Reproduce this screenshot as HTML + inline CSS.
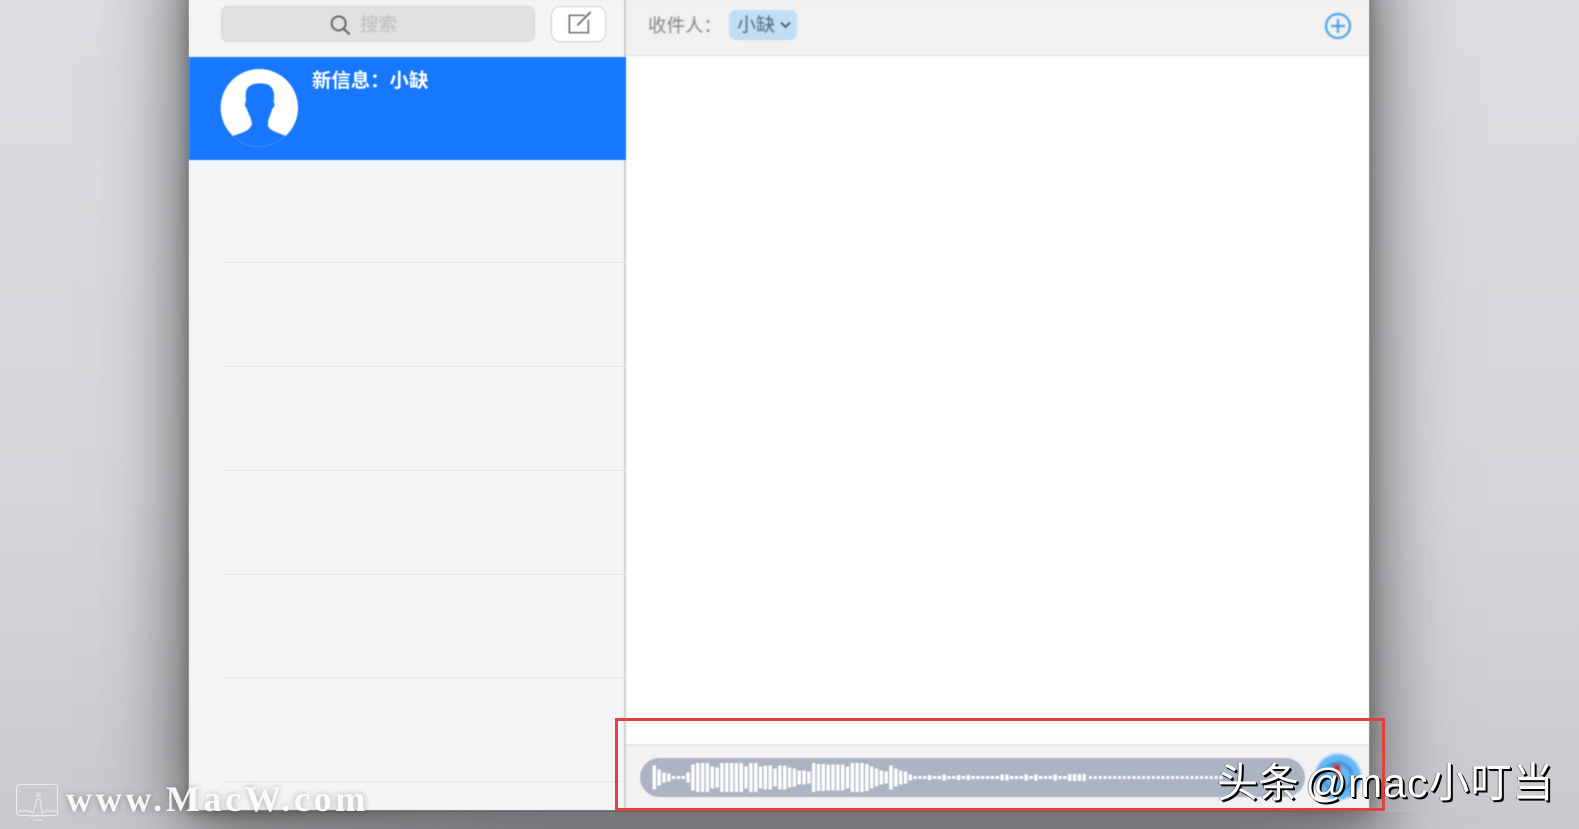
<!DOCTYPE html>
<html lang="zh"><head><meta charset="utf-8"><style>
html,body{margin:0;padding:0;width:1579px;height:829px;overflow:hidden}
body{position:relative;background:linear-gradient(180deg,#dcdde0 0%,#d6d7da 60%,#c8c9cc 100%);font-family:"Liberation Sans","Noto Sans CJK SC",sans-serif}
.a{position:absolute}
.line{position:absolute;left:221px;width:405px;height:1px;background:#e8e8ea}
</style></head><body>
<div class="a" style="left:189px;top:-60px;width:1180px;height:870px;box-shadow:0 12px 75px 4px rgba(0,0,0,.62),0 4px 16px rgba(0,0,0,.28)"></div>
<div class="a" style="left:0;top:812px;width:1579px;height:17px;background:linear-gradient(90deg,rgba(120,120,124,0) 12%,#77777b 35%,#77777b 78%,rgba(120,120,124,0) 90%)"></div>
<div class="a" id="w" style="left:189px;top:0;width:1180px;height:810px;background:#fff;overflow:hidden;filter:blur(.5px)">
 <div class="a" style="left:0;top:0;width:437px;height:810px;background:#f4f4f6;border-right:2px solid #cdcdcf;box-sizing:border-box"></div>
 <div class="a" style="left:437px;top:0;width:743px;height:56px;background:#f1f1f2;border-bottom:1px solid #dcdcdd;box-sizing:border-box"></div>
 <div class="a" style="left:437px;top:744px;width:743px;height:66px;background:#f2f2f3;border-top:2px solid #e3e3e4;box-sizing:border-box"></div>
 <div class="a" style="left:0;top:56.500px;width:437px;height:103.500px;background:#1777ff"></div>
</div>
<div class="line" style="top:262px"></div><div class="line" style="top:366px"></div><div class="line" style="top:470px"></div><div class="line" style="top:574px"></div><div class="line" style="top:677px"></div><div class="line" style="top:781px"></div>
<div class="a" style="left:221px;top:6px;width:314px;height:36px;background:#e0e0e1;border-radius:7px;box-shadow:inset 0 0 0 1px #d8d8d9;filter:blur(.5px)"></div>
<div class="a" style="left:552px;top:7px;width:53px;height:34px;background:#fff;border-radius:8px;box-shadow:0 0 0 1px #d0d0d2,0 1px 1px #bbb;filter:blur(.5px)"></div>
<svg class="a" style="left:180px;top:0;filter:blur(.6px)" width="460" height="170" viewBox="0 0 1380 510">
 <circle cx="238" cy="323" r="116" fill="#fff"/>
 <path fill="#1777ff" d="M160 408C182 398 208 396 216 372C214 352 204 340 200 325L194 316L198 300C196 285 196 272 204 262C214 252 226 250 240 250C258 250 272 254 278 268C284 282 282 295 281 305L284 316L276 328C272 345 262 358 264 378C272 394 295 398 318 408C290 432 260 440 238 440C210 440 180 430 160 408Z"/>
 <path fill="none" stroke="#4e97fb" stroke-width="2" d="M160 408C180 430 210 440 238 440C260 440 290 432 315 408"/>
 <circle cx="476" cy="70" r="21" fill="none" stroke="#6a6a6a" stroke-width="6"/>
 <path d="M491 86L507 101" stroke="#6a6a6a" stroke-width="7" stroke-linecap="round"/>
 <path d="M1214 46H1168V98H1225V60" fill="none" stroke="#777" stroke-width="5"/>
 <path d="M1192 76L1232 36" stroke="#777" stroke-width="6"/>
</svg>
<div class="a" style="left:360px;top:13px;font-size:18.500px;line-height:24px;color:#bcbcbe;filter:blur(.7px)">搜索</div>
<div class="a" style="left:312px;top:69px;font-size:19.400px;line-height:25px;font-weight:700;color:#fff;filter:blur(.5px);white-space:nowrap">新信息：小缺</div>
<div class="a" style="left:648px;top:14px;font-size:18.500px;line-height:24px;color:#858585;filter:blur(.7px);white-space:nowrap">收件人：</div>
<div class="a" style="left:729px;top:10px;width:68px;height:30px;border-radius:7px;background:#c2def5;filter:blur(.5px)"></div>
<div class="a" style="left:737px;top:14px;font-size:19px;line-height:24px;color:#55687a;filter:blur(.7px);white-space:nowrap">小缺</div>
<svg class="a" style="left:779px;top:20px;filter:blur(.4px)" width="14" height="10"><path d="M2 2.500L6.500 7L11 2.500" fill="none" stroke="#55687a" stroke-width="2"/></svg>
<svg class="a" style="left:1320px;top:8px;filter:blur(.7px)" width="36" height="36">
 <circle cx="18" cy="18" r="12" fill="none" stroke="#48a3e4" stroke-width="2.200"/>
 <path d="M18 11V25M11 18H25" stroke="#48a3e4" stroke-width="2.200"/>
</svg>
<div class="a" style="left:640px;top:758px;width:665px;height:39px;border-radius:20px;background:#acb3c2;filter:blur(.4px)"></div>
<svg class="a" style="left:0;top:0;filter:blur(.5px)" width="1579" height="829">
 <g transform="translate(654.300 777.500) scale(4.830 1)" stroke="#fff" stroke-width=".72" fill="none">
  <path d="M0-12v24M1-8v16M2-5v10M3-4v8M4-1.500v3M5-1.500v3M6-1.500v3M7-5v10M8-13v26M9-14.500v29M10-14.500v29M11-14.500v29M12-11v22M13-10v20M14-14.500v29M15-14.500v29M16-14.500v29M17-14.500v29M18-14.500v29M19-11v22M20-14.500v29M21-14.500v29M22-11v22M23-12v24M24-12v24M25-9v18M26-12v24M27-12v24M28-10v20M29-9v18M30-7v14M31-7v14M32-6v12M33-14.500v29M34-13.500v27M35-13.500v27M36-13v26M37-13v26M38-13v26M39-13v26M40-11v22M41-14.500v29M42-14.500v29M43-14.500v29M44-13.500v27M45-11v22M46-9v18M47-7v14M48-6v12M49-12v24M50-9v18M51-7v14M52-6v12M53-3v6M54-1.500v3M55-1.500v3M56-1.500v3M57-2.500v5M58-1.500v3M59-1.500v3M60-3v6M61-1.500v3M62-1.500v3M63-2.500v5M64-1.500v3M65-2.500v5M66-1.500v3M67-1.500v3M68-1.500v3M69-1.500v3M70-1.500v3M71-1.500v3M72-3v6M73-3v6M74-1.500v3M75-1.500v3M76-1.500v3M77-3v6M78-1.500v3M79-3v6M80-1.500v3M81-1.500v3M82-1.500v3M83-3v6M84-1.500v3M85-1.500v3M86-3.500v7M87-3.500v7M88-3.500v7M89-3.500v7"/>
  <path stroke-width="3" stroke-dasharray=".62 .38" d="M90 0H118"/>
 </g>
</svg>
<svg class="a" style="left:1314px;top:753px;filter:blur(1.400px)" width="48" height="48">
 <circle cx="24" cy="24" r="23" fill="#66b8f3"/>
 <circle cx="24" cy="24" r="14" fill="none" stroke="#3f8fd6" stroke-width="3"/>
 <path d="M19 12h7v12h-4z" fill="#e8201c"/>
</svg>
<div class="a" style="left:615px;top:718px;width:770px;height:93px;box-sizing:border-box;border:3px solid #e2403f"></div>
<svg class="a" style="left:15px;top:783px;opacity:.85" width="46" height="46" fill="none" stroke="#f2f2f2" stroke-width="1">
 <rect x="1.500" y="1.500" width="41" height="31" rx="3"/>
 <path d="M3 28H14L18 30L22 16L25 16L27 30L31 28H42M22 10h3v3h-3zM14 33H31M18 37H28"/>
</svg>
<div class="a" style="left:66px;top:779px;font-family:'Liberation Serif','Noto Serif CJK SC',serif;font-weight:700;font-size:36px;line-height:40px;letter-spacing:3.700px;color:rgba(255,255,255,.92);white-space:nowrap;text-shadow:0 0 7px rgba(0,0,0,.3)">www.MacW.com</div>
<div class="a" style="left:1217px;top:758px;font-size:41px;line-height:50px;word-spacing:-5px;color:#fff;white-space:nowrap;text-shadow:2px 2px 0 #000,1px 1px 0 #000,-1px 0 0 rgba(0,0,0,.35)">头条 <span style="letter-spacing:1px">@mac小叮当</span></div>
</body></html>
